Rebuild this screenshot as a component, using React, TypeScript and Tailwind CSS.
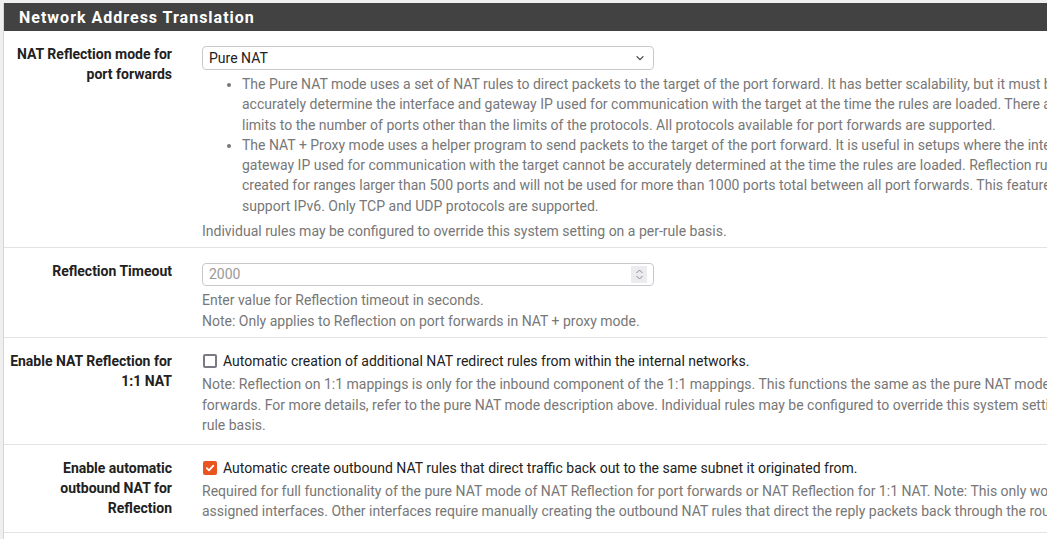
import type { ReactNode } from "react";

const font = { fontFamily: "Roboto, 'Liberation Sans', sans-serif" };

function Row({ label, children, pb }: { label: ReactNode; children: ReactNode; pb: string }) {
  return (
    <div className={`flex border-b border-[#e3e3e3] pt-[13px] ${pb}`}>
      <div className="w-[183px] shrink-0 pr-[15px] text-right text-[14px] font-bold leading-[20px] text-[#212121]">
        {label}
      </div>
      <div className="pl-[15px] flex-1">{children}</div>
    </div>
  );
}

function Lines({ lines, className }: { lines: string[]; className?: string }) {
  return (
    <div className={className}>
      {lines.map((l, i) => (
        <div key={i} className="whitespace-nowrap">
          {l}
        </div>
      ))}
    </div>
  );
}

function Checkbox({ checked }: { checked?: boolean }) {
  if (checked) {
    return (
      <span className="mt-[3px] flex h-[14px] w-[14px] shrink-0 items-center justify-center rounded-[2px] bg-[#e95420]">
        <svg width="10" height="10" viewBox="0 0 10 10" fill="none">
          <path d="M1.8 5.2 L4 7.3 L8.3 2.6" stroke="white" strokeWidth="1.8" strokeLinecap="round" strokeLinejoin="round" />
        </svg>
      </span>
    );
  }
  return <span className="mt-[3px] block h-[14px] w-[14px] shrink-0 rounded-[2px] border-2 border-[#7a7a85] bg-white" />;
}

export default function App() {
  return (
    <div className="h-screen w-full overflow-hidden bg-[#efefef] pl-[3px] pt-[3px]" style={font}>
      <div className="w-[1400px] border-l border-[#d6d6d6] bg-white">
        <div className="flex h-[28px] items-center bg-[#424242] pl-[15px] pt-[2px] text-[16px] font-bold tracking-[1px] text-white">
          Network Address Translation
        </div>

        <Row
          pb="pb-[6px]"
          label={
            <>
              NAT Reflection mode for
              <br />
              port forwards
            </>
          }
        >
          <div className="mt-[2px] flex h-[24px] w-[452px] items-center justify-between rounded-[4px] border border-[#c8c8c8] bg-white pl-[6px] pr-[8px] text-[14px] text-[#212121]">
            <span>Pure NAT</span>
            <svg width="10" height="10" viewBox="0 0 10 10" fill="none">
              <path d="M2 3.6 L5 6.6 L8 3.6" stroke="#444" strokeWidth="1.3" strokeLinecap="round" strokeLinejoin="round" />
            </svg>
          </div>
          <ul className="mt-[4px] list-disc pl-[40px] text-[14px] leading-[20.3px] text-[#777777]">
            <li>
              <Lines
                lines={[
                  "The Pure NAT mode uses a set of NAT rules to direct packets to the target of the port forward. It has better scalability, but it must be possible to",
                  "accurately determine the interface and gateway IP used for communication with the target at the time the rules are loaded. There are no inherent",
                  "limits to the number of ports other than the limits of the protocols. All protocols available for port forwards are supported.",
                ]}
              />
            </li>
            <li>
              <Lines
                lines={[
                  "The NAT + Proxy mode uses a helper program to send packets to the target of the port forward. It is useful in setups where the interface and/or",
                  "gateway IP used for communication with the target cannot be accurately determined at the time the rules are loaded. Reflection rules are not",
                  "created for ranges larger than 500 ports and will not be used for more than 1000 ports total between all port forwards. This feature does not",
                  "support IPv6. Only TCP and UDP protocols are supported.",
                ]}
              />
            </li>
          </ul>
          <div className="mt-[5px] text-[14px] leading-[20px] text-[#777777]">
            Individual rules may be configured to override this system setting on a per-rule basis.
          </div>
        </Row>

        <Row pb="pb-[6px]" label="Reflection Timeout">
          <div className="mt-[2px] flex h-[23px] w-[452px] items-center justify-between rounded-[4px] border border-[#c8c8c8] bg-white pl-[6px] pr-[6px] text-[14px] text-[#9a9a9a]">
            <span>2000</span>
            <span className="flex h-[17px] w-[16px] items-center justify-center bg-[#ececf0]">
              <svg width="9" height="13" viewBox="0 0 9 13" fill="none">
                <path d="M1.5 5 L4.5 2 L7.5 5" stroke="#8a8a95" strokeWidth="1" />
                <path d="M1.5 8 L4.5 11 L7.5 8" stroke="#8a8a95" strokeWidth="1" />
              </svg>
            </span>
          </div>
          <div className="mt-[4px] text-[14px] leading-[20.5px] text-[#777777]">
            <div>Enter value for Reflection timeout in seconds.</div>
            <div>Note: Only applies to Reflection on port forwards in NAT + proxy mode.</div>
          </div>
        </Row>

        <Row
          pb="pb-[8px]"
          label={
            <>
              Enable NAT Reflection for
              <br />
              1:1 NAT
            </>
          }
        >
          <div className="flex gap-[6px] pl-[1px] text-[14px] leading-[20px] text-[#212121]">
            <Checkbox />
            <span className="whitespace-nowrap">
              Automatic creation of additional NAT redirect rules from within the internal networks.
            </span>
          </div>
          <Lines
            className="mt-[3px] text-[14px] leading-[20.5px] text-[#777777]"
            lines={[
              "Note: Reflection on 1:1 mappings is only for the inbound component of the 1:1 mappings. This functions the same as the pure NAT mode for port",
              "forwards. For more details, refer to the pure NAT mode description above. Individual rules may be configured to override this system setting on a per-",
              "rule basis.",
            ]}
          />
        </Row>

        <Row
          pb="pb-[10px]"
          label={
            <>
              Enable automatic
              <br />
              outbound NAT for
              <br />
              Reflection
            </>
          }
        >
          <div className="flex gap-[6px] pl-[1px] text-[14px] leading-[20px] text-[#212121]">
            <Checkbox checked />
            <span className="whitespace-nowrap">
              Automatic create outbound NAT rules that direct traffic back out to the same subnet it originated from.
            </span>
          </div>
          <Lines
            className="mt-[3px] text-[14px] leading-[20.5px] text-[#777777]"
            lines={[
              "Required for full functionality of the pure NAT mode of NAT Reflection for port forwards or NAT Reflection for 1:1 NAT. Note: This only works for",
              "assigned interfaces. Other interfaces require manually creating the outbound NAT rules that direct the reply packets back through the router.",
            ]}
          />
        </Row>
        <div className="h-[40px]" />
      </div>
    </div>
  );
}
